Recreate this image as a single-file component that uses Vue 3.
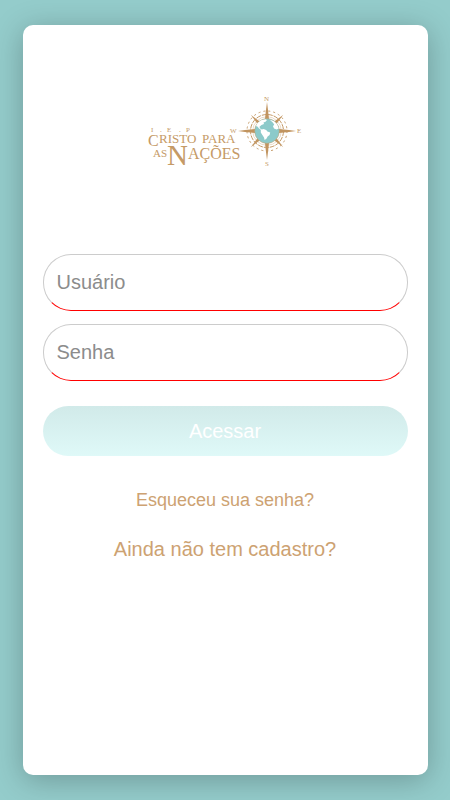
<template>
  <main class="page">
    <section class="card">
      <header class="brand">
        <svg class="logo" viewBox="0 0 156 78" role="img" aria-label="I.E.P Cristo para as Nações">
          <g class="letters">
            <text y="40" font-size="7">
              <tspan x="4">I</tspan><tspan x="13">.</tspan><tspan x="20">E</tspan><tspan x="32">.</tspan><tspan x="39">P</tspan>
            </text>
            <text y="51" font-size="13">
              <tspan x="1" y="54" font-size="16">C</tspan><tspan x="12" y="51">RISTO</tspan><tspan x="55">PARA</tspan>
            </text>
            <text y="67" font-size="16">
              <tspan x="6" y="65" font-size="11">AS</tspan><tspan x="20" y="73" font-size="29">N</tspan><tspan x="41" y="67">AÇÕES</tspan>
            </text>
            <text x="117" y="9" font-size="7">N</text>
            <text x="118" y="74" font-size="7">S</text>
            <text x="83" y="41" font-size="7">W</text>
            <text x="150" y="41" font-size="7">E</text>
          </g>
          <g transform="translate(120 39)">
            <circle class="ring dots" r="20" />
            <circle class="ring arcs" r="16.5" />
            <circle class="ring thin" r="14.3" />
            <g class="points">
              <path v-for="angle in [45, 135, 225, 315]" :key="angle" :transform="`rotate(${angle})`" d="M0 -23 L1.6 -12 H-1.6 Z" />
              <path v-for="angle in [0, 90, 180, 270]" :key="angle" :transform="`rotate(${angle})`" d="M0 -29 L0.9 -22 L2 -12 H-2 L-0.9 -22 Z" />
            </g>
            <circle class="globe" r="12.4" />
            <g class="land">
              <path d="M-11 -5 L-9.5 -8 L-6 -10.8 L-1.5 -11.8 L0 -11 L-1.5 -9.2 L-3.5 -8.5 L-3 -7 L-5.5 -6 L-7.5 -4.2 L-7 -2.6 L-5.2 -1.8 L-5.8 -1 L-8 -2.4 L-9.3 -4.2 Z" />
              <path d="M-6.2 -1.2 L-3.5 -2 L-0.8 -1 L0.4 0.6 L3.2 1.6 L2.6 4 L0.6 5.4 L-0.6 7.8 L-2.4 9 L-3 6.4 L-4.8 3.8 L-6.2 1.6 Z" />
              <path d="M2.5 -11.5 L7 -9.8 L10 -7 L11.8 -2.4 L9.6 -1.4 L7 -2.6 L6 -4.8 L7.2 -6.6 L5.8 -8.6 Z" />
            </g>
          </g>
        </svg>
      </header>

      <form class="login" @submit.prevent>
        <input v-model="user" type="text" placeholder="Usuário" aria-label="Usuário" autocomplete="username" />
        <input v-model="password" type="password" placeholder="Senha" aria-label="Senha" autocomplete="current-password" />
        <button type="submit" :disabled="!isComplete">Acessar</button>
      </form>

      <nav class="links">
        <a class="forgot" href="#">Esqueceu sua senha?</a>
        <a class="signup" href="#">Ainda não tem cadastro?</a>
      </nav>
    </section>
  </main>
</template>

<script setup>
import { ref, computed } from "vue";

let user = ref("");
let password = ref("");
let isComplete = computed(() => user.value !== "" && password.value !== "");
</script>

<style>
body {
  margin: 0;
  background-color: #94cccb;
}
</style>

<style scoped>
.page {
  display: flex;
  box-sizing: border-box;
  min-height: 100vh;
  padding: 25px 5%;
  background-color: #94cccb;
  font-family: "Liberation Sans", Arial, sans-serif;
}

.card {
  flex: 1;
  min-width: 0;
  padding: 67px 20px 20px;
  box-sizing: border-box;
  border-radius: 10px;
  background-color: white;
  box-shadow: 0 5px 30px rgba(0, 0, 0, 0.25);
}

.brand {
  display: flex;
  justify-content: center;
  margin-bottom: 84px;
}

.logo {
  display: block;
  width: 156px;
  height: 78px;
  overflow: visible;
}

.letters {
  fill: #c59a66;
  font-family: "Liberation Serif", "Times New Roman", serif;
}

.ring {
  fill: none;
  stroke: #c59a66;
  stroke-width: 1px;
}

.dots {
  stroke-dasharray: 2 3;
}

.arcs {
  stroke-dasharray: 5 1;
}

.thin {
  stroke: #dec5a5;
  stroke-width: 0.6px;
}

.points {
  fill: #c1945f;
}

.globe {
  fill: #8ccaca;
  stroke: #c59a66;
  stroke-width: 0.5px;
}

.land {
  fill: white;
}

.login {
  display: flex;
  flex-direction: column;
}

input {
  box-sizing: border-box;
  width: 100%;
  height: 57px;
  margin: 0 0 13px;
  padding: 0 13px;
  border: 1px solid #ccc;
  border-bottom-color: red;
  border-radius: 28px;
  outline: none;
  background-color: white;
  color: #444;
  font-family: inherit;
  font-size: 20px;
}

input::placeholder {
  color: #8c8c8c;
  opacity: 1;
}

button {
  height: 50px;
  margin: 12px 0 0;
  padding: 0 20px;
  border: none;
  border-radius: 25px;
  background: linear-gradient(#92cccb, #b2f3f2);
  color: white;
  font-family: inherit;
  font-size: 20px;
  cursor: pointer;
}

button:disabled {
  background: linear-gradient(#d1eae9, #dff9f8);
  cursor: default;
}

.links {
  display: flex;
  flex-direction: column;
  align-items: center;
  gap: 26px;
  margin-top: 33px;
}

.links a {
  color: #cda272;
  text-decoration: none;
}

.forgot {
  font-size: 18px;
  line-height: 22px;
}

.signup {
  font-size: 20px;
  line-height: 24px;
}
</style>
